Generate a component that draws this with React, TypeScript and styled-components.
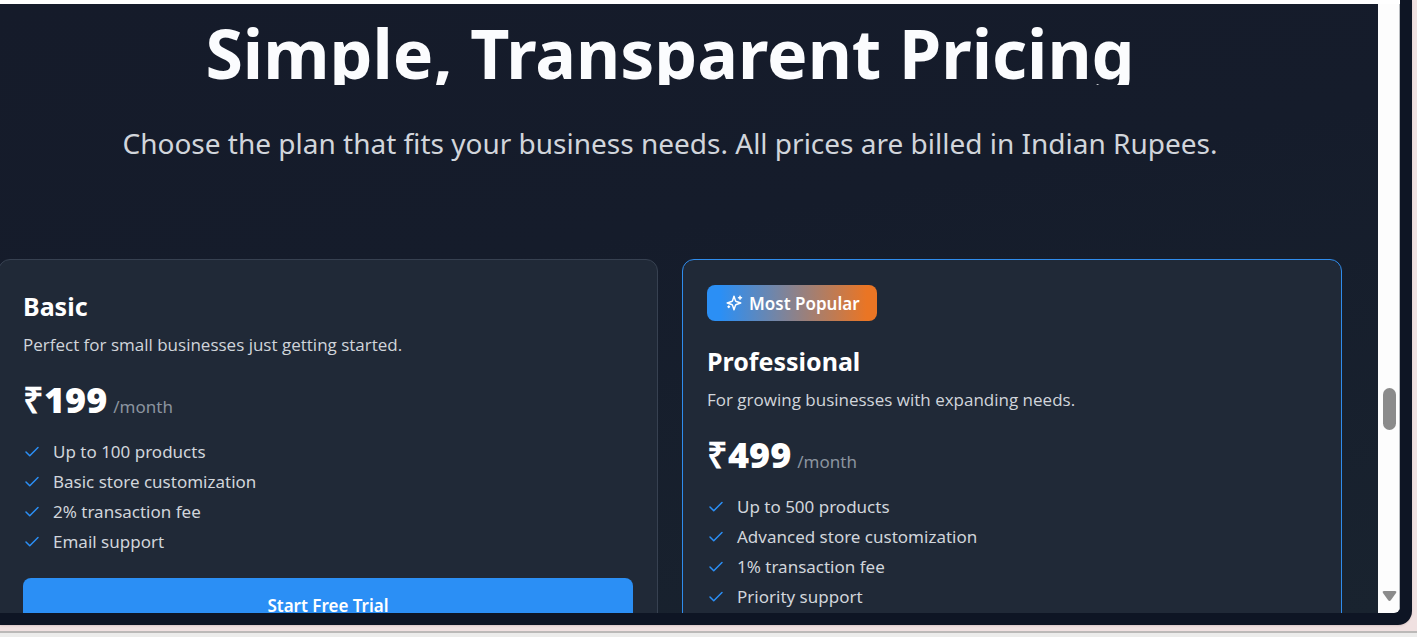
import React from "react";
import styled, { createGlobalStyle } from "styled-components";

const GlobalStyle = createGlobalStyle`
  * { box-sizing: border-box; }
  body {
    margin: 0;
    background: #f0e1e1;
    font-family: "Segoe UI", "Noto Sans", "Open Sans", sans-serif;
    overflow: hidden;
  }
  h1, h2, p, ul { margin: 0; padding: 0; }
`;

const Desktop = styled.div`
  display: flex;
  flex-direction: column;
  height: 100vh;
`;

const WindowFrame = styled.div`
  flex: 1;
  min-height: 0;
  display: flex;
  margin-right: 5px;
  padding: 0 12px 12px 0;
  background: #0e1524;
  border-radius: 0 0 14px 0;
  box-shadow: 0 1px 2px #d9c6c6;
`;

const Viewport = styled.div`
  flex: 1;
  min-width: 0;
  display: flex;
  border-top: 4px solid #ffffff;
  border-radius: 0 0 6px 0;
  overflow: hidden;
`;

const Page = styled.main`
  flex: 1;
  min-width: 0;
  padding: 17px 36px 0 0;
  margin-left: -2px;
  background: linear-gradient(170deg, #151b2a 0%, #151c2b 40%, #19232f 100%);
  overflow: hidden;
`;

const Heading = styled.h1`
  font-size: 68px;
  line-height: 64px;
  font-weight: 700;
  text-align: center;
  white-space: nowrap;
  color: #fbfcfe;
  overflow: hidden;
`;

const Subtitle = styled.p`
  margin-top: 36px;
  font-size: 28px;
  line-height: 44px;
  text-align: center;
  white-space: nowrap;
  color: #d1d5db;
`;

const Plans = styled.div`
  display: grid;
  grid-template-columns: 1fr 1fr;
  gap: 24px;
  margin-top: 94px;
`;

const Card = styled.section<{ $featured?: boolean }>`
  padding: 24px;
  background: #202937;
  border: 1px solid ${(p) => (p.$featured ? "#2f8cec" : "#374151")};
  border-radius: 12px;
`;

const Badge = styled.div`
  display: inline-flex;
  align-items: center;
  gap: 6px;
  height: 36px;
  margin: 1px 0 18px;
  padding: 0 17px 0 18px;
  border-radius: 8px;
  background: linear-gradient(90deg, #2b8ff5 8%, #ea7524 94%);
  color: #ffffff;
  font-size: 17px;
  font-weight: 600;
  vertical-align: top;
`;

const PlanName = styled.h2`
  font-size: 25px;
  line-height: 44px;
  font-weight: 700;
  color: #ffffff;
`;

const Description = styled.p`
  font-family: "Segoe UI", "Open Sans", sans-serif;
  font-size: 17px;
  line-height: 34px;
  color: #d1d5db;
`;

const Price = styled.p`
  display: flex;
  align-items: baseline;
  gap: 6px;
  margin-top: 18px;
  line-height: 40px;
  color: #8b949f;
  font-size: 17px;
`;

const Amount = styled.span`
  color: #ffffff;
  font-family: "Segoe UI", "Open Sans", sans-serif;
  font-size: 36px;
  font-weight: 800;
`;

const Features = styled.ul`
  margin: 10px 0 21px;
  list-style: none;
`;

const Feature = styled.li`
  display: flex;
  align-items: center;
  gap: 12px;
  font-size: 17px;
  line-height: 30px;
  color: #d1d5db;
`;

const TrialButton = styled.button`
  display: block;
  width: 100%;
  height: 54px;
  border: 0;
  border-radius: 8px;
  background: #2b8ff5;
  color: #ffffff;
  font: 600 17px "Segoe UI", "Noto Sans", "Open Sans", sans-serif;
`;

const Scrollbar = styled.div`
  flex: none;
  width: 22px;
  display: flex;
  flex-direction: column;
  align-items: center;
  padding: 0 0 11px 1px;
  background: #fdfdfd;
  border-right: 1px solid #b9bcc0;
`;

const Track = styled.div<{ $share: number }>`
  flex: ${(p) => p.$share};
`;

const Thumb = styled.div`
  width: 13px;
  height: 42px;
  border-radius: 7px;
  background: #8b8b8b;
`;

const Ledge = styled.div`
  height: 6px;
  margin-top: 6px;
  border-top: 2px solid #bbb9b8;
  background: #ececeb;
`;

const CheckIcon = () => (
  <svg width="18" height="18" viewBox="0 0 24 24" fill="none" stroke="#2b8ff5" strokeWidth="2" strokeLinecap="round" strokeLinejoin="round" aria-hidden="true">
    <path d="M20 6 9 17l-5-5" />
  </svg>
);

const SparklesIcon = () => (
  <svg width="18" height="18" viewBox="0 0 24 24" fill="none" stroke="currentColor" strokeWidth="2" strokeLinecap="round" strokeLinejoin="round" aria-hidden="true">
    <path d="m12 3-1.912 5.813a2 2 0 0 1-1.275 1.275L3 12l5.813 1.912a2 2 0 0 1 1.275 1.275L12 21l1.912-5.813a2 2 0 0 1 1.275-1.275L21 12l-5.813-1.912a2 2 0 0 1-1.275-1.275L12 3Z" />
    <path d="M5 16v2M4 17h2M20 3v4M18 5h4" />
  </svg>
);

interface Plan {
  name: string;
  description: string;
  price: string;
  features: string[];
  featured?: boolean;
}

const plans: Plan[] = [
  {
    name: "Basic",
    description: "Perfect for small businesses just getting started.",
    price: "₹199",
    features: ["Up to 100 products", "Basic store customization", "2% transaction fee", "Email support"],
  },
  {
    name: "Professional",
    description: "For growing businesses with expanding needs.",
    price: "₹499",
    features: ["Up to 500 products", "Advanced store customization", "1% transaction fee", "Priority support"],
    featured: true,
  },
];

const PlanCard = ({ plan }: { plan: Plan }) => (
  <Card $featured={plan.featured}>
    {plan.featured && (
      <Badge>
        <SparklesIcon />
        Most Popular
      </Badge>
    )}
    <PlanName>{plan.name}</PlanName>
    <Description>{plan.description}</Description>
    <Price>
      <Amount>{plan.price}</Amount>
      /month
    </Price>
    <Features>
      {plan.features.map((feature) => (
        <Feature key={feature}>
          <CheckIcon />
          {feature}
        </Feature>
      ))}
    </Features>
    {!plan.featured && <TrialButton type="button">Start Free Trial</TrialButton>}
  </Card>
);

export default function App() {
  return (
    <Desktop>
      <GlobalStyle />
      <WindowFrame>
        <Viewport>
          <Page>
            <Heading>Simple, Transparent Pricing</Heading>
            <Subtitle>Choose the plan that fits your business needs. All prices are billed in Indian Rupees.</Subtitle>
            <Plans>
              {plans.map((plan) => (
                <PlanCard key={plan.name} plan={plan} />
              ))}
            </Plans>
          </Page>
          <Scrollbar>
            <Track $share={12} />
            <Thumb />
            <Track $share={5} />
            <svg width="15" height="12" viewBox="0 0 15 12" aria-hidden="true">
              <path d="M2 1h11q2 0 1 2L9 10q-1.500 2-3 0L1 3Q0 1 2 1Z" fill="#8b8b8b" />
            </svg>
          </Scrollbar>
        </Viewport>
      </WindowFrame>
      <Ledge />
    </Desktop>
  );
}
